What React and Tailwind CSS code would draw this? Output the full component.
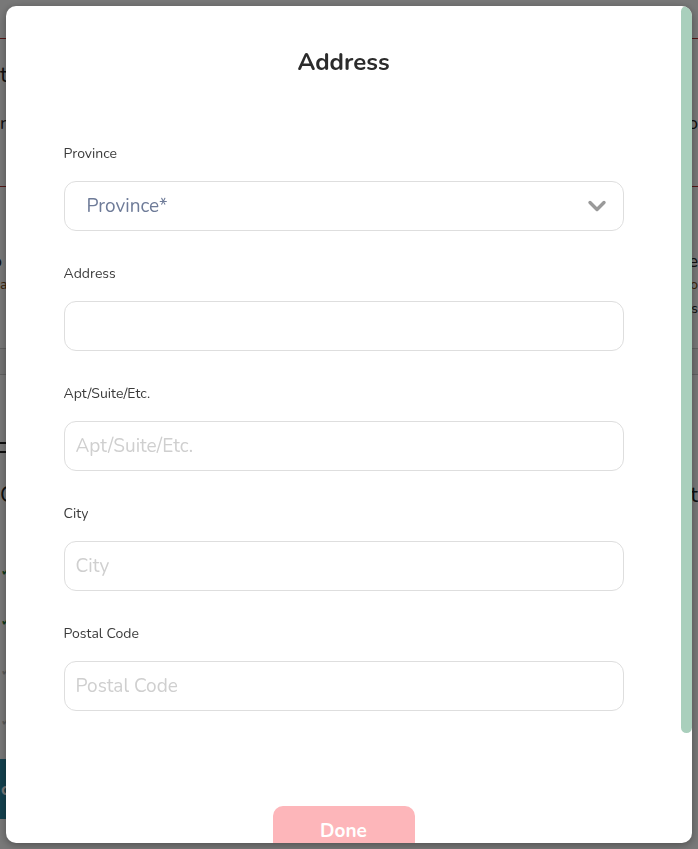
import { useState } from "react";

function Field({ label, placeholder, value, onChange }) {
    return (
        <div className="flex flex-col">
            <label className="text-[14px] leading-5 text-[#3b3b3b]">{label}</label>
            <input
                type="text"
                value={value}
                onChange={(e) => onChange(e.target.value)}
                placeholder={placeholder}
                className="mt-[17px] h-[50px] w-full rounded-[12px] border border-[#dedede] bg-white px-[11px] text-[19px] text-[#333] outline-none placeholder:text-[#cfcfcf]"
            />
        </div>
    );
}

function Backdrop() {
    // page behind the dialog, only its edges show
    return (
        <div className="flex min-h-[849px] flex-col text-[#222]">
            <div className="h-[39px] border-b border-[#b03030]" />
            <div className="flex justify-between pt-[22px] text-[22px] leading-7">
                <span>title</span>
                <span></span>
            </div>
            <div className="flex justify-between pt-[22px] text-[18px] leading-6">
                <span>n</span>
                <span>o</span>
            </div>
            <div className="mt-[51px] h-0 border-b border-[#b03030]" />
            <div className="flex justify-between pt-[62px] text-[18px] leading-6">
                <span className="-ml-[8px]">o</span>
                <span>e</span>
            </div>
            <div className="flex justify-between text-[14px] leading-6 text-[#7a4a10]">
                <span>a</span>
                <span>o</span>
            </div>
            <div className="flex justify-end text-[14px] leading-6">
                <span>s</span>
            </div>
            <div className="mt-[27px] h-[27px] border-y border-[#cfcfcf] bg-[#f3f3f3]" />
            <div className="flex justify-between pt-[62px] text-[28px] leading-8">
                <span className="-ml-[6px]">F</span>
                <span></span>
            </div>
            <div className="flex justify-between pt-[12px] text-[22px] leading-7">
                <span>C</span>
                <span>t</span>
            </div>
            <div className="flex flex-col gap-[30px] pt-[52px] text-[16px] leading-5">
                <span className="text-[#1f7a3a]">✓</span>
                <span className="text-[#1f7a3a]">✓</span>
                <span className="text-[#bbb]">✓</span>
                <span className="text-[#bbb]">✓</span>
            </div>
            <div className="mt-[28px] flex h-[60px] w-[120px] items-center bg-[#2a8aa6] pl-[1px] text-[18px] font-bold text-white">
                c
            </div>
        </div>
    );
}

export default function App() {
    const [form, setForm] = useState({ address: "", apt: "", city: "", postal: "" });
    const set = (k) => (v) => setForm({ ...form, [k]: v });

    return (
        <div className="relative h-[849px] overflow-hidden bg-white font-['Nunito','Open_Sans',sans-serif]">
            <Backdrop />
            <div className="fixed inset-0 bg-black/[0.53]" />

            <div className="fixed bottom-[6px] left-[6px] right-[6px] top-[6px] overflow-hidden rounded-[10px] bg-white shadow-[0_2px_8px_rgba(0,0,0,0.35)]">
                <div className="h-full overflow-y-auto pr-[11px] [scrollbar-width:none]">
                    <div className="mx-auto w-[560px] pb-[114px] pt-[40px]">
                        <h2 className="text-center text-[24px] font-bold leading-8 text-[#2b2b2b]">Address</h2>

                        <div className="mt-[66px] flex flex-col gap-[33px]">
                            <div className="flex flex-col">
                                <label className="text-[14px] leading-5 text-[#3b3b3b]">Province</label>
                                <button className="mt-[17px] flex h-[50px] w-full items-center justify-between rounded-[12px] border border-[#dedede] bg-white pl-[22px] pr-[16px] text-left">
                                    <span className="text-[19px] text-[#6e7b98]">Province*</span>
                                    <svg width="20" height="14" viewBox="0 0 20 14" fill="none">
                                        <path d="M3 3.5l7 7 7-7" stroke="#9a9a9a" strokeWidth="3.4" strokeLinecap="round" strokeLinejoin="round" />
                                    </svg>
                                </button>
                            </div>
                            <Field label="Address" placeholder="" value={form.address} onChange={set("address")} />
                            <Field label="Apt/Suite/Etc." placeholder="Apt/Suite/Etc." value={form.apt} onChange={set("apt")} />
                            <Field label="City" placeholder="City" value={form.city} onChange={set("city")} />
                            <Field label="Postal Code" placeholder="Postal Code" value={form.postal} onChange={set("postal")} />
                        </div>

                        <div className="mt-[95px] flex justify-center">
                            <button className="h-[50px] w-[142px] rounded-[10px] bg-[#fdb6ba] text-[19px] font-bold text-white">
                                Done
                            </button>
                        </div>
                    </div>
                </div>
                {/* scroll thumb */}
                <div className="absolute right-0 top-0 h-[727px] w-[11px] rounded-full bg-[#a9cfbc]" />
            </div>
        </div>
    );
}
